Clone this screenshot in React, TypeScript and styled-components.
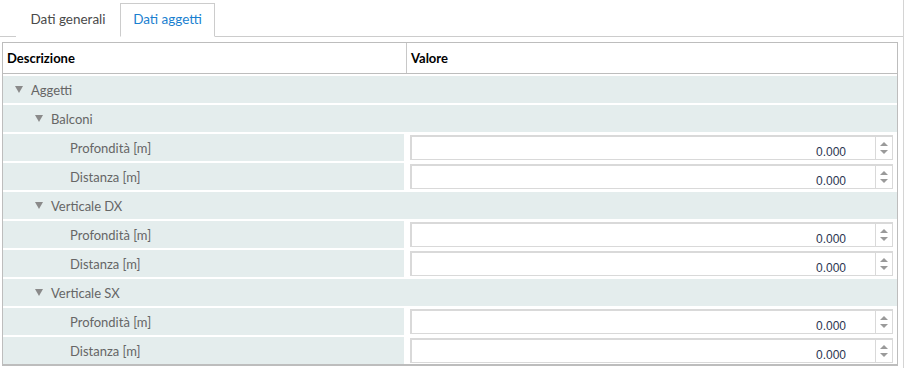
import React, { useState } from 'react'
import styled, { createGlobalStyle } from 'styled-components'

const GlobalStyle = createGlobalStyle`
    html, body {
        margin: 0;
        padding: 0;
        background: #ffffff;
        font-family: Lato, "Open Sans", "Liberation Sans", sans-serif;
    }
`

interface Riga {
    livello: number
    etichetta: string
    gruppo?: boolean
}

const righe: Riga[] = [
    { livello: 0, etichetta: 'Aggetti', gruppo: true },
    { livello: 1, etichetta: 'Balconi', gruppo: true },
    { livello: 2, etichetta: 'Profondità [m]' },
    { livello: 2, etichetta: 'Distanza [m]' },
    { livello: 1, etichetta: 'Verticale DX', gruppo: true },
    { livello: 2, etichetta: 'Profondità [m]' },
    { livello: 2, etichetta: 'Distanza [m]' },
    { livello: 1, etichetta: 'Verticale SX', gruppo: true },
    { livello: 2, etichetta: 'Profondità [m]' },
    { livello: 2, etichetta: 'Distanza [m]' },
]

const Pagina = styled.div`
    width: 904px;
    height: 368px;
    box-sizing: border-box;
    border-right: 1px solid #d4d4d4;
    display: flex;
    flex-direction: column;
`

const BarraTab = styled.div`
    display: flex;
    height: 37px;
    padding-top: 3px;
    box-sizing: border-box;
    padding-left: 16px;
    border-bottom: 1px solid #cccccc;
`

const Tab = styled.div<{ $attivo?: boolean }>`
    display: flex;
    align-items: center;
    justify-content: center;
    box-sizing: border-box;
    white-space: nowrap;
    margin-bottom: -1px;
    padding-bottom: 2px;
    font-size: 13.5px;
    color: ${p => (p.$attivo ? '#1a7fd0' : '#4a4a4a')};
    background: #ffffff;
    border: 1px solid ${p => (p.$attivo ? '#cccccc' : 'transparent')};
    border-bottom-color: ${p => (p.$attivo ? '#ffffff' : 'transparent')};
    width: ${p => (p.$attivo ? '95px' : '104px')};
`

const Tabella = styled.div`
    margin: 5px 5px 0 2px;
    border: 1px solid #bdbdbd;
    border-bottom-width: 2px;
    display: flex;
    flex-direction: column;
    gap: 2px;
`

const Intestazione = styled.div`
    display: grid;
    grid-template-columns: 403px 1fr;
    height: 30px;
    border-bottom: 1px solid #bdbdbd;
    font-size: 13px;
    font-weight: 700;
    color: #000000;
`

const CellaIntestazione = styled.div`
    display: flex;
    align-items: center;
    padding-left: 4px;
    & + & {
        border-left: 1px solid #c8c8c8;
    }
`

const RigaGruppo = styled.div<{ $livello: number }>`
    display: flex;
    align-items: center;
    height: 27px;
    background: #e4eded;
    padding-left: ${p => 12 + p.$livello * 20}px;
    font-size: 13px;
    color: #666666;
`

const Triangolo = styled.span`
    width: 0;
    height: 0;
    border-left: 4px solid transparent;
    border-right: 4px solid transparent;
    border-top: 7px solid #8a8a8a;
    margin-right: 8px;
`

const RigaValore = styled.div`
    display: grid;
    grid-template-columns: 401px 1fr;
    gap: 2px;
    height: 27px;
`

const CellaEtichetta = styled.div<{ $livello: number }>`
    display: flex;
    align-items: center;
    background: #e4eded;
    padding-left: ${p => 27 + p.$livello * 20}px;
    font-size: 13px;
    color: #666666;
`

const CellaValore = styled.div`
    display: flex;
    align-items: center;
    padding: 0 4px 0 4px;
`

const Campo = styled.div`
    flex: 1;
    display: flex;
    height: 25px;
    box-sizing: border-box;
    border: 2px solid #d9d9d9;
    border-width: 2px 1px 1px 2px;
`

const Numero = styled.input`
    flex: 1;
    min-width: 0;
    border: none;
    outline: none;
    text-align: right;
    padding: 7px 29px 0 0;
    font-family: "Liberation Sans", Arial, sans-serif;
    font-size: 12px;
    color: #2b3550;
    background: transparent;
`

const Spinner = styled.div`
    width: 16px;
    border-left: 1px solid #d9d9d9;
    display: flex;
    flex-direction: column;
    align-items: center;
    justify-content: center;
    gap: 4px;
`

const Freccia = styled.span<{ $su?: boolean }>`
    width: 0;
    height: 0;
    border-left: 4px solid transparent;
    border-right: 4px solid transparent;
    ${p => (p.$su ? 'border-bottom: 4px solid #9a9a9a;' : 'border-top: 4px solid #9a9a9a;')}
`

const App = () => {
    const [valori] = useState(righe.map(() => '0.000'))

    return <>
        <GlobalStyle />
        <Pagina>
            <BarraTab>
                <Tab>Dati generali</Tab>
                <Tab $attivo>Dati aggetti</Tab>
            </BarraTab>
            <Tabella>
                <Intestazione>
                    <CellaIntestazione>Descrizione</CellaIntestazione>
                    <CellaIntestazione>Valore</CellaIntestazione>
                </Intestazione>
                {righe.map((r, i) => r.gruppo
                    ? <RigaGruppo key={i} $livello={r.livello}>
                        <Triangolo />{r.etichetta}
                    </RigaGruppo>
                    : <RigaValore key={i}>
                        <CellaEtichetta $livello={r.livello}>{r.etichetta}</CellaEtichetta>
                        <CellaValore>
                            <Campo>
                                <Numero defaultValue={valori[i]} readOnly />
                                <Spinner>
                                    <Freccia $su />
                                    <Freccia />
                                </Spinner>
                            </Campo>
                        </CellaValore>
                    </RigaValore>
                )}
            </Tabella>
        </Pagina>
    </>
}

export default App
